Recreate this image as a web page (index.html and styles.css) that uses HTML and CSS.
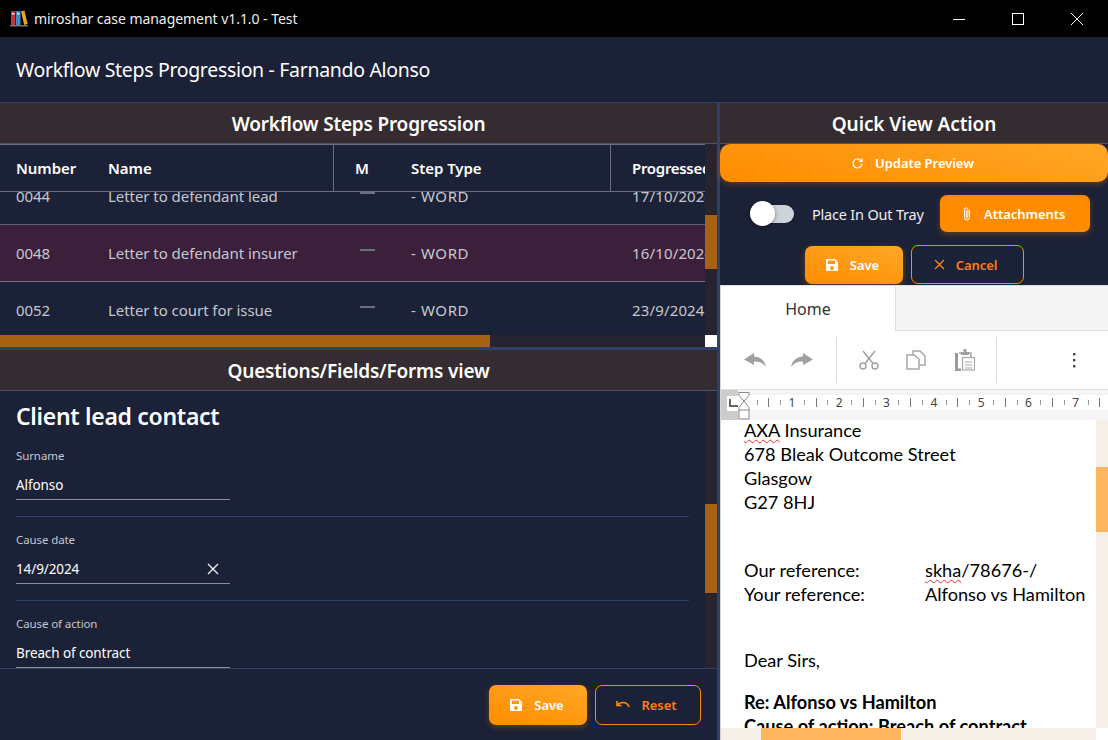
FILE: index.html
```html
<!DOCTYPE html>
<html lang="en">
<head>
    <meta charset="UTF-8">
    <title>miroshar case management v1.1.0 - Test</title>
    <link rel="stylesheet" href="styles.css">
</head>
<body>
    <div class="titlebar">
        <svg class="app-icon" width="18" height="18" viewBox="0 0 18 18">
            <rect x="1" y="1" width="4.500" height="14" fill="#c8323c"/>
            <rect x="6" y="1" width="4.500" height="14" fill="#3a8cc8"/>
            <path d="M11 1.500l3.400-1 3.200 13.500-3.400 1z" fill="#e8a81c"/>
            <rect x="0" y="15" width="18" height="1.500" fill="#7a7468"/>
            <rect x="2" y="3" width="2.500" height="1.500" fill="#eee"/>
            <rect x="7" y="3" width="2.500" height="1.500" fill="#eee"/>
        </svg>
        <span class="app-title">miroshar case management v1.1.0 - Test</span>
        <div class="win-btns">
            <svg width="14" height="14" viewBox="0 0 14 14"><path d="M1 7.500h12" stroke="#fff" fill="none"/></svg>
            <svg width="14" height="14" viewBox="0 0 14 14"><rect x="1.500" y="1.500" width="11" height="11" stroke="#fff" fill="none"/></svg>
            <svg width="14" height="14" viewBox="0 0 14 14"><path d="M1 1l12 12M13 1L1 13" stroke="#fff" fill="none"/></svg>
        </div>
    </div>

    <header class="page-head">Workflow Steps Progression - Farnando Alonso</header>

    <div class="main">
        <section class="left">
            <div class="steps">
                <h2 class="panel-title">Workflow Steps Progression</h2>
                <div class="table-wrap">
                    <div class="table-view">
                        <div class="table-scroll">
                            <div class="row head">
                                <div class="c-num">Number</div>
                                <div class="c-name">Name</div>
                                <div class="c-m">M</div>
                                <div class="c-type">Step Type</div>
                                <div class="c-date">Progressed</div>
                            </div>
                            <div class="table-body">
                                <div class="row first">
                                    <div class="c-num">0044</div>
                                    <div class="c-name">Letter to defendant lead</div>
                                    <div class="c-m"><i class="dash"></i></div>
                                    <div class="c-type">- WORD</div>
                                    <div class="c-date">17/10/2024</div>
                                </div>
                                <div class="row selected">
                                    <div class="c-num">0048</div>
                                    <div class="c-name">Letter to defendant insurer</div>
                                    <div class="c-m"><i class="dash"></i></div>
                                    <div class="c-type">- WORD</div>
                                    <div class="c-date">16/10/2024</div>
                                </div>
                                <div class="row">
                                    <div class="c-num">0052</div>
                                    <div class="c-name">Letter to court for issue</div>
                                    <div class="c-m"><i class="dash"></i></div>
                                    <div class="c-type">- WORD</div>
                                    <div class="c-date">23/9/2024</div>
                                </div>
                            </div>
                        </div>
                        <div class="vbar vbar-steps"><div class="vthumb"></div></div>
                    </div>
                    <div class="hbar-row">
                        <div class="hbar"><div class="hthumb"></div></div>
                        <div class="corner"></div>
                    </div>
                </div>
            </div>

            <div class="forms">
                <h2 class="panel-title">Questions/Fields/Forms view</h2>
                <div class="form-view">
                    <div class="form-scroll">
                        <h3 class="form-title">Client lead contact</h3>
                        <div class="field">
                            <label>Surname</label>
                            <div class="value">Alfonso</div>
                        </div>
                        <div class="field">
                            <label>Cause date</label>
                            <div class="value">14/9/2024
                                <svg width="12" height="12" viewBox="0 0 12 12"><path d="M1 1l10 10M11 1L1 11" stroke="#eee" stroke-width="1.400" fill="none"/></svg>
                            </div>
                        </div>
                        <div class="field">
                            <label>Cause of action</label>
                            <div class="value">Breach of contract</div>
                        </div>
                    </div>
                    <div class="vbar vbar-form"><div class="vthumb"></div></div>
                </div>
                <div class="form-foot">
                    <button class="btn solid w-save">
                        <svg width="14" height="14" viewBox="0 0 14 14"><path fill-rule="evenodd" d="M2 1h8l3 3v8a1 1 0 0 1-1 1H2a1 1 0 0 1-1-1V2a1 1 0 0 1 1-1zm1 1.500V6h7V2.500zM7 8a2 2 0 1 0 0 4 2 2 0 0 0 0-4z" fill="#fff"/></svg>
                        Save
                    </button>
                    <button class="btn outline w-reset">
                        <svg width="14" height="10" viewBox="0 0 14 10"><path d="M1 1v4.500h4.500M1.500 5C3 3 5 2.500 7 2.500c3 0 5 1.500 6 4.500" stroke="#ff8c00" stroke-width="1.600" fill="none"/></svg>
                        Reset
                    </button>
                </div>
            </div>
        </section>

        <section class="right">
            <h2 class="panel-title quick">Quick View Action</h2>
            <button class="btn solid update">
                <svg width="13" height="13" viewBox="0 0 13 13"><path d="M11 6.500a4.500 4.500 0 1 1-1.300-3.200L11 4.500M11 1.500v3H8" stroke="#fff" stroke-width="1.200" fill="none"/></svg>
                Update Preview
            </button>
            <div class="tray-row">
                <div class="toggle"><div class="knob"></div></div>
                <span class="tray-label">Place In Out Tray</span>
                <button class="btn flat attach">
                    <svg width="12" height="16" viewBox="0 0 12 16"><path d="M8.500 4v7.500a2.500 2.500 0 0 1-5 0V3.500a1.700 1.700 0 0 1 3.400 0V11a.8.8 0 0 1-1.600 0V4.500" stroke="#fff" stroke-width="1" fill="none"/></svg>
                    Attachments
                </button>
            </div>
            <div class="action-row">
                <button class="btn solid w-save">
                    <svg width="14" height="14" viewBox="0 0 14 14"><path fill-rule="evenodd" d="M2 1h8l3 3v8a1 1 0 0 1-1 1H2a1 1 0 0 1-1-1V2a1 1 0 0 1 1-1zm1 1.500V6h7V2.500zM7 8a2 2 0 1 0 0 4 2 2 0 0 0 0-4z" fill="#fff"/></svg>
                    Save
                </button>
                <button class="btn outline w-cancel">
                    <svg width="11" height="11" viewBox="0 0 11 11"><path d="M1 1l9 9M10 1l-9 9" stroke="#ff8c00" stroke-width="1.200" fill="none"/></svg>
                    Cancel
                </button>
            </div>

            <div class="editor">
                <div class="tabs">
                    <div class="tab">Home</div>
                </div>
                <div class="toolbar">
                    <svg class="ico-undo" width="24" height="16" viewBox="0 0 24 16"><path d="M11 1L1 7.500 11 13V9.500c4.500-.5 8.500 1 12 5.500-1-6-5-10-12-10.500z" fill="#a0a0a0"/></svg>
                    <svg class="ico-redo" width="24" height="16" viewBox="0 0 24 16"><path d="M13 1l10 6.500L13 13V9.500C8.500 9 4.500 10.500 1 15c1-6 5-10 12-10.500z" fill="#a0a0a0"/></svg>
                    <i class="tool-sep sep-a"></i>
                    <svg class="ico-cut" width="20" height="20" viewBox="0 0 20 20"><g stroke="#a0a0a0" stroke-width="1.400" fill="none"><circle cx="4" cy="16" r="3"/><circle cx="16" cy="16" r="3"/><path d="M6 13.500L16 1M14 13.500L4 1"/></g></svg>
                    <svg class="ico-copy" width="20" height="20" viewBox="0 0 20 20"><g stroke="#a8a8a8" stroke-width="1.500" fill="#fff"><path d="M7 1h7l5 5v9H7z"/><path d="M1 5h7l5 4v10H1z"/></g></svg>
                    <svg class="ico-paste" width="20" height="22" viewBox="0 0 20 22"><path d="M1.500 4v17H6" stroke="#9a9a9a" stroke-width="3" fill="none"/><path d="M4 4h12v4" stroke="#a8a8a8" stroke-width="1.500" fill="none"/><rect x="6" y="3" width="8" height="3" fill="#a0a0a0"/><rect x="8.500" y="0" width="3" height="3" fill="#a0a0a0"/><g stroke="#a8a8a8" stroke-width="1.200" fill="#fff"><rect x="7.500" y="8.500" width="12" height="12.500"/><path d="M10 13h7M10 16h7M10 19h7"/></g></svg>
                    <i class="tool-sep sep-b"></i>
                    <svg class="ico-more" width="4" height="16" viewBox="0 0 4 16"><g fill="#444"><rect x="1" y="1" width="2.400" height="2.400"/><rect x="1" y="7" width="2.400" height="2.400"/><rect x="1" y="13" width="2.400" height="2.400"/></g></svg>
                </div>
                <div class="ruler">
                    <div class="ruler-band">
                        <span class="inch"></span>
                        <span class="inch">1</span>
                        <span class="inch">2</span>
                        <span class="inch">3</span>
                        <span class="inch">4</span>
                        <span class="inch">5</span>
                        <span class="inch">6</span>
                        <span class="inch">7</span>
                        <span class="inch"></span>
                    </div>
                    <div class="tab-mark"></div>
                    <svg class="indent" width="12" height="28" viewBox="0 0 12 28"><g stroke="#8a8a8a" fill="#fff"><path d="M1 .5h10v3L6 9 1 3.500z"/><path d="M1 18.500v-3L6 9l5 6.500v3z"/><rect x="1" y="18" width="10" height="9"/></g></svg>
                </div>
                <div class="doc-area">
                    <div class="doc-view">
                        <div class="page">
                            <p><span class="spell">AXA</span> Insurance</p>
                            <p>678 Bleak Outcome Street</p>
                            <p>Glasgow</p>
                            <p>G27 8HJ</p>
                            <div class="refs">
                                <span>Our reference:</span><span><span class="spell">skha</span>/78676-/</span>
                                <span>Your reference:</span><span>Alfonso vs Hamilton</span>
                            </div>
                            <p class="dear">Dear Sirs,</p>
                            <p class="re"><b>Re: Alfonso vs Hamilton</b></p>
                            <p><b>Cause of action: Breach of contract</b></p>
                        </div>
                        <div class="doc-vbar"><div class="doc-vthumb"></div></div>
                    </div>
                    <div class="doc-hbar"><div class="doc-hthumb"></div></div>
                </div>
            </div>
        </section>
    </div>
</body>
</html>
```

FILE: styles.css
```css
* {
    box-sizing: border-box;
}
html, body {
    height: 100%;
}
body {
    margin: 0;
    height: 740px;
    overflow: hidden;
    display: flex;
    flex-direction: column;
    background: #1b2136;
    color: #fff;
    font-family: "Noto Sans", "Open Sans", Arial, sans-serif;
    font-size: 14px;
}

/* window title */
.titlebar {
    height: 37px;
    flex: none;
    background: #000;
    display: flex;
    align-items: center;
    padding-left: 10px;
}
.app-icon {
    margin-right: 6px;
}
.app-title {
    font-size: 14px;
    color: #eee;
    letter-spacing: -0.05px;
}
.win-btns {
    margin-left: auto;
    display: flex;
    gap: 45px;
    padding-right: 24px;
}

.page-head {
    height: 66px;
    flex: none;
    display: flex;
    align-items: center;
    padding-left: 16px;
    font-size: 19.5px;
    letter-spacing: -0.32px;
    border-bottom: 1px solid #2f4166;
}

.main {
    flex: 1;
    display: flex;
    min-height: 0;
}

.left {
    width: 720px;
    flex: none;
    display: flex;
    flex-direction: column;
    border-right: 3px solid #2f4166;
}
.right {
    flex: 1;
    min-width: 0;
    display: flex;
    flex-direction: column;
}

.panel-title {
    margin: 0;
    height: 41px;
    flex: none;
    display: flex;
    align-items: center;
    justify-content: center;
    padding-top: 2px;
    background: #342c30;
    font-size: 19px;
    font-weight: 600;
    letter-spacing: -0.2px;
    border-bottom: 1px solid #4e5264;
}
.panel-title.quick {
    letter-spacing: -0.1px;
}

/* steps table */
.steps {
    height: 247px;
    flex: none;
    display: flex;
    flex-direction: column;
    border-bottom: 3px solid #2f4166;
}
.table-wrap {
    flex: 1;
    min-height: 0;
    display: flex;
    flex-direction: column;
}
.table-view {
    flex: 1;
    min-height: 0;
    display: flex;
}
.table-scroll {
    flex: 1;
    min-width: 0;
    overflow: hidden;
    display: flex;
    flex-direction: column;
}
.row {
    display: grid;
    grid-template-columns: 92px 242px 61px 216px 160px;
    width: 771px;
    height: 57px;
    flex: none;
    align-items: center;
    color: #c6c8d0;
    font-size: 15px;
    letter-spacing: -0.05px;
    border-bottom: 1px solid #5e6272;
    white-space: nowrap;
}
.row > div {
    padding-left: 16px;
}
.row > .c-m, .row > .c-date {
    padding-left: 21px;
}
.row > .c-type {
    letter-spacing: 0.6px;
}
.row > .c-date {
    letter-spacing: 0.15px;
}
.row.head {
    height: 48px;
    background: #1b2136;
    color: #fff;
    font-weight: 600;
    align-items: stretch;
    border-top: 1px solid #6a6e7c;
    border-bottom: 1px solid #6a6e7c;
}
.row.head > div {
    display: flex;
    align-items: center;
}
.row.head .c-name, .row.head .c-type {
    letter-spacing: -0.05px;
    border-right: 1px solid #6a6e7c;
}
.row.head .c-date {
    letter-spacing: -0.3px;
}
.table-body {
    flex: 1;
    min-height: 0;
    overflow: hidden;
}
.row.first {
    margin-top: -24px;
}
.row.selected {
    background: #3c1f3b;
    border-bottom-color: #7b6a80;
}
.dash {
    display: block;
    width: 15px;
    height: 2px;
    margin: 0 0 6px 5px;
    background: #6c6f7c;
}

/* scrollbars */
.vbar {
    width: 12px;
    flex: none;
    background: #26242e;
}
.vthumb {
    background: #a86213;
}
.vbar-steps .vthumb {
    margin-top: 71px;
    height: 54px;
}
.vbar-form .vthumb {
    margin-top: 113px;
    height: 89px;
}
.hbar-row {
    height: 12px;
    flex: none;
    display: flex;
}
.hbar {
    flex: 1;
    background: #26242e;
}
.hthumb {
    width: 490px;
    height: 100%;
    background: #a86213;
}
.corner {
    width: 12px;
    background: #fff;
}

/* form */
.forms {
    flex: 1;
    min-height: 0;
    display: flex;
    flex-direction: column;
}
.form-view {
    height: 278px;
    flex: none;
    display: flex;
    border-bottom: 1px solid #2f4166;
}
.form-scroll {
    flex: 1;
    min-width: 0;
    overflow: hidden;
    padding: 0 16px;
}
.form-title {
    margin: 9px 0 0;
    height: 33px;
    line-height: 32px;
    font-size: 23px;
    font-weight: 600;
    letter-spacing: -0.3px;
}
.field {
    height: 84px;
    padding-top: 15px;
    border-bottom: 1px solid #2f4166;
}
.field:last-child {
    border-bottom: none;
}
.field label {
    display: block;
    height: 16px;
    line-height: 16px;
    font-size: 11.5px;
    color: #c6c8d0;
    letter-spacing: -0.1px;
}
.value {
    width: 214px;
    height: 30px;
    margin-top: 6px;
    padding-right: 11px;
    display: flex;
    align-items: center;
    justify-content: space-between;
    font-size: 13.5px;
    letter-spacing: -0.1px;
    border-bottom: 1px solid #8b8d98;
}
.form-foot {
    flex: 1;
    display: flex;
    justify-content: flex-end;
    align-items: flex-start;
    gap: 8px;
    padding: 16px 16px 0 0;
}

/* buttons */
.btn {
    display: flex;
    align-items: center;
    justify-content: center;
    gap: 11px;
    height: 40px;
    padding: 0 3px 0 0;
    border: none;
    border-radius: 7px;
    font-family: inherit;
    font-size: 13px;
    font-weight: 600;
    letter-spacing: -0.05px;
    color: #fff;
}
.btn.solid {
    background: linear-gradient(15deg, #ff8c00, #ffa726);
    box-shadow: 0 2px 6px rgba(255, 140, 0, 0.3);
}
.btn.flat {
    background: #ff8c00;
    box-shadow: 0 2px 6px rgba(255, 140, 0, 0.3);
}
.btn.outline {
    background: transparent;
    border: 1px solid #ff8c00;
    color: #ff7f17;
}
.w-save {
    width: 98px;
}
.w-reset {
    width: 106px;
}
.w-cancel {
    width: 113px;
}
.update {
    width: 100%;
    height: 38px;
    flex: none;
    border-radius: 10px;
}
.tray-row {
    height: 63px;
    flex: none;
    display: flex;
    align-items: center;
    padding-left: 30px;
}
.toggle {
    width: 44px;
    height: 18px;
    flex: none;
    border-radius: 9px;
    background: #ced3da;
}
.knob {
    width: 25px;
    height: 25px;
    margin-top: -3.500px;
    border-radius: 50%;
    background: #fff;
    box-shadow: 0 1px 4px rgba(0, 0, 0, 0.4);
}
.tray-label {
    margin-left: 18px;
    font-size: 14.5px;
    letter-spacing: -0.2px;
    color: #eee;
    white-space: nowrap;
}
.attach {
    width: 150px;
    height: 37px;
    margin-left: 16px;
}
.action-row {
    height: 40px;
    flex: none;
    display: flex;
    justify-content: center;
    gap: 8px;
}
.action-row .btn {
    height: 39px;
}
.action-row .w-save {
    height: 38px;
    margin-top: 1px;
}

/* word editor */
.editor {
    flex: 1;
    min-height: 0;
    display: flex;
    flex-direction: column;
    background: #fff;
    color: #000;
    border-left: 1px solid #d4d4d4;
    border-top: 1px solid #dedede;
}
.tabs {
    height: 45px;
    flex: none;
    background: #f5f5f5;
    border-bottom: 1px solid #dedede;
}
.tab {
    width: 175px;
    height: 45px;
    display: flex;
    align-items: center;
    justify-content: center;
    background: #fff;
    border-right: 1px solid #dedede;
    font-size: 16px;
    color: #333;
}
.toolbar {
    height: 59px;
    flex: none;
    display: flex;
    align-items: center;
    padding-left: 22px;
    border-bottom: 1px solid #dedede;
}
.tool-sep {
    width: 1px;
    height: 46px;
    background: #dedede;
}
.ico-redo {
    margin-left: 23px;
}
.sep-a {
    margin-left: 22px;
}
.ico-cut {
    margin-left: 22px;
}
.ico-copy {
    margin-left: 27px;
}
.ico-paste {
    margin-left: 29px;
}
.sep-b {
    margin-left: 21px;
}
.ico-more {
    margin-left: 75px;
}

.ruler {
    height: 30px;
    flex: none;
    position: relative;
    background: #f5f5f5;
    padding-top: 5px;
}
.ruler-band {
    height: 15px;
    display: flex;
    overflow: hidden;
    background: #fff;
}
.inch {
    width: 47.300px;
    flex: none;
    text-align: center;
    font-size: 12px;
    line-height: 15px;
    color: #444;
    background:
        linear-gradient(#777, #777) 0 3px / 1px 9px no-repeat,
        linear-gradient(#999, #999) 11.800px 5px / 1px 5px no-repeat,
        linear-gradient(#999, #999) 35.500px 5px / 1px 5px no-repeat;
}
.tab-mark {
    position: absolute;
    left: 0;
    top: 0;
    width: 17px;
    height: 30px;
    background: #fff;
    border: solid #ccc;
    border-width: 6px 0 9px 6px;
}
.tab-mark::after {
    content: "";
    display: block;
    width: 7px;
    height: 6px;
    margin: 3px 0 0 2px;
    border-left: 2px solid #666;
    border-bottom: 2px solid #666;
}
.indent {
    position: absolute;
    left: 17px;
    top: 2px;
}

.doc-area {
    flex: 1;
    min-height: 0;
    display: flex;
    flex-direction: column;
}
.doc-view {
    flex: 1;
    min-height: 0;
    display: flex;
}
.page {
    flex: 1;
    min-width: 0;
    overflow: hidden;
    background: #fff;
    padding-left: 23px;
    font-family: Lato, "Open Sans", sans-serif;
    font-size: 18.2px;
    line-height: 24.100px;
}
.page p {
    margin: 0;
}
.page p:first-child {
    margin-top: -2px;
}
.spell {
    text-decoration: underline wavy #e03030 1px;
    text-underline-offset: 2px;
}
.refs {
    display: grid;
    grid-template-columns: 181px auto;
    margin-top: 44px;
    white-space: nowrap;
}
.page .dear {
    margin-top: 41px;
}
.page .re {
    margin-top: 18px;
}
.doc-vbar {
    width: 12px;
    flex: none;
    background: #f5efe8;
}
.doc-vthumb {
    margin-top: 47px;
    height: 65px;
    background: #fdb55f;
}
.doc-hbar {
    height: 12px;
    flex: none;
    margin-right: 12px;
    padding-left: 40px;
    background: #f5efe8;
}
.doc-hthumb {
    width: 140px;
    height: 100%;
    background: #fdb55f;
}
```
